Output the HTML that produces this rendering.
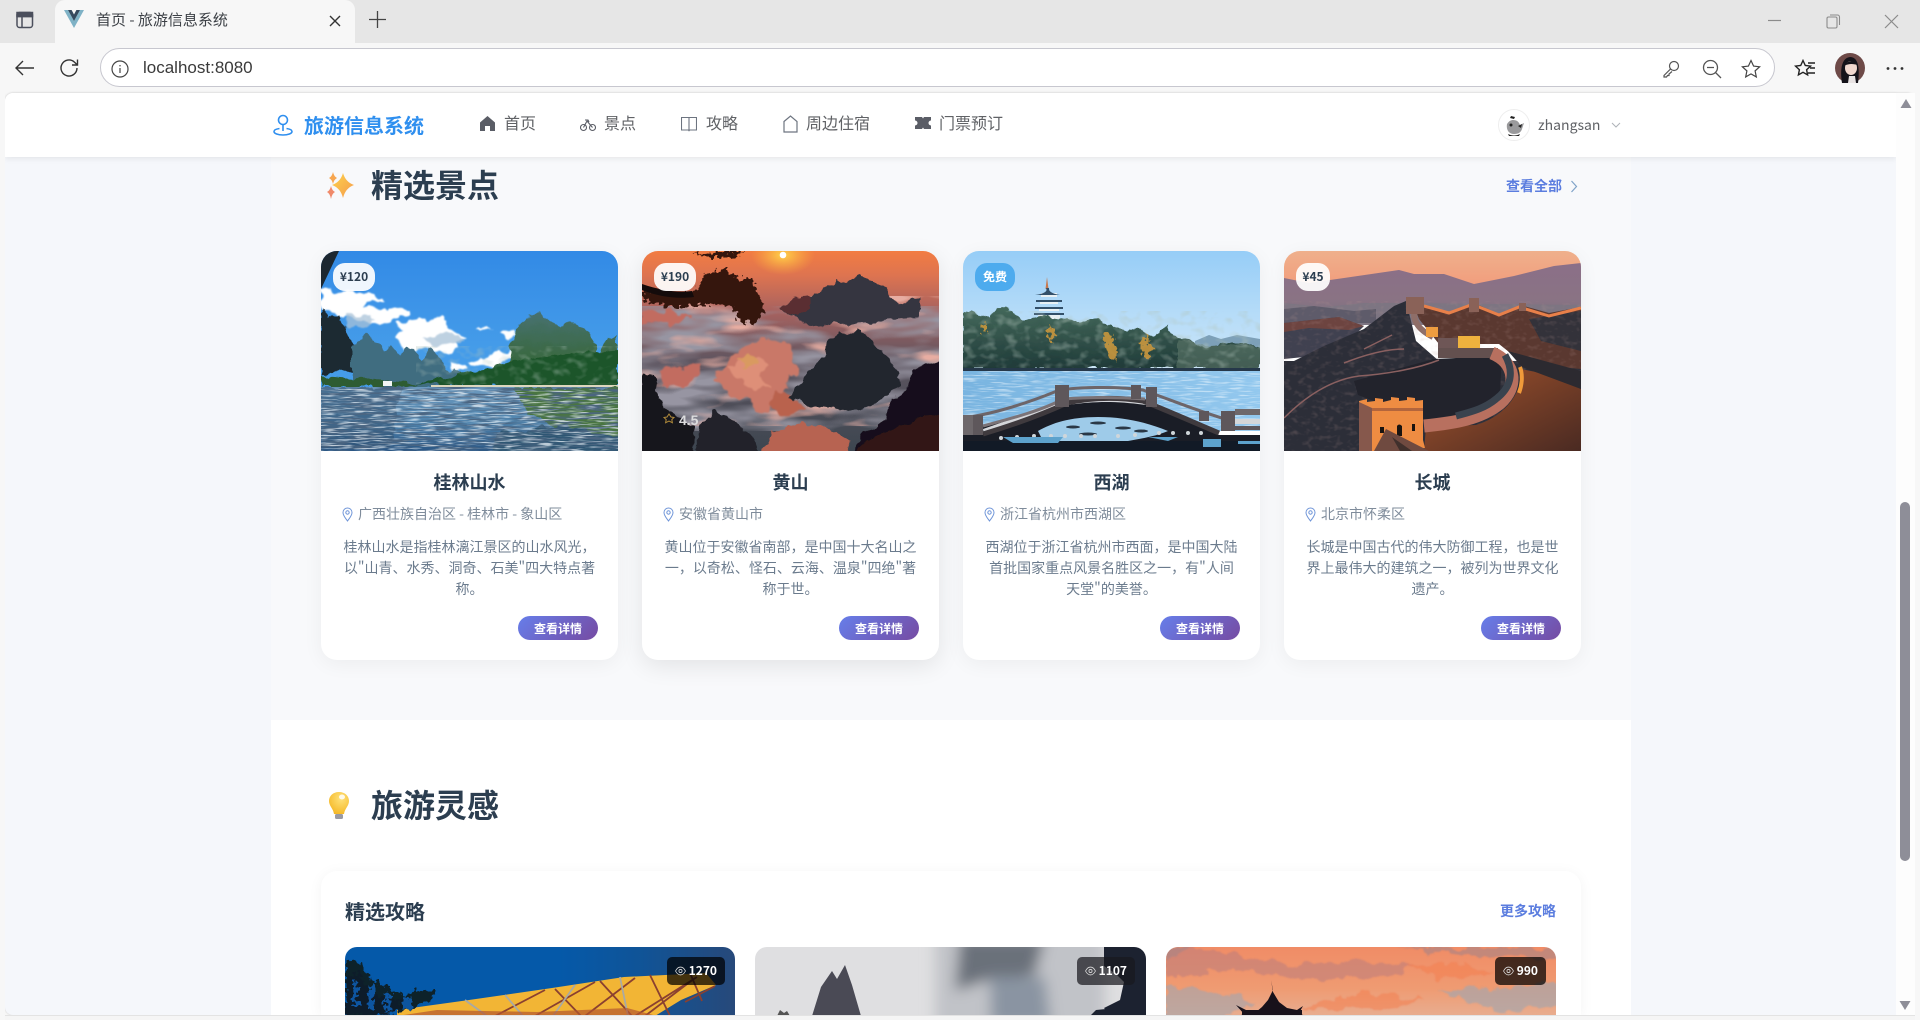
<!DOCTYPE html>
<html lang="zh"><head><meta charset="utf-8"><title>首页 - 旅游信息系统</title>
<style>
*{box-sizing:border-box;margin:0;padding:0}
html,body{width:1920px;height:1020px;overflow:hidden;background:#f7f7f7;font-family:"Liberation Sans","Noto Sans CJK SC",sans-serif}
#root{position:absolute;left:0;top:0;width:1920px;height:1020px;overflow:hidden}
.a{position:absolute;white-space:nowrap}
.c{font-family:"Noto Sans CJK SC","Liberation Sans",sans-serif}
#page{position:absolute;left:5px;top:93px;width:1910px;height:922px;background:#f5f7fb;border-radius:8px;overflow:hidden;box-shadow:0 0 2px rgba(0,0,0,.18)}
.nm{font:16px/24px "Noto Sans CJK SC",sans-serif;color:#606266;top:110px}
.card{position:absolute;top:251px;width:297px;height:409px;background:#fff;border-radius:16px;overflow:hidden;box-shadow:0 4px 20px rgba(0,0,0,.05)}
.card svg.img{position:absolute;left:0;top:0;width:297px;height:200px;display:block}
.badge{position:absolute;left:12px;top:12px;height:28px;line-height:28px;padding:0 8px;border-radius:12px;background:rgba(255,255,255,.92);font:700 12px/28px "Noto Sans CJK SC",sans-serif;color:#2c3e50}
.t{position:absolute;left:0;width:297px;top:218px;text-align:center;font:700 18px/26px "Noto Sans CJK SC",sans-serif;color:#2c3e50}
.loc{position:absolute;left:37px;top:253px;font:14px/20px "Noto Sans CJK SC",sans-serif;color:#7f8c9b;white-space:nowrap}
.pin{position:absolute;left:21px;top:256px}
.d{position:absolute;left:10px;width:277px;top:286px;text-align:center;font:14px/21px "Noto Sans CJK SC",sans-serif;color:#6b7b8d}
.btn{position:absolute;left:197px;top:365px;width:80px;height:24px;border-radius:12px;background:linear-gradient(135deg,#667eea,#764ba2);color:#fff;text-align:center;font:700 12px/25px "Noto Sans CJK SC",sans-serif}
.g{position:absolute;top:947px;height:69px;border-radius:12px 12px 0 0;overflow:hidden}
.v{position:absolute;top:957px;height:28px;border-radius:5px;background:rgba(0,0,0,.72);color:#fff;font:700 12px/28px "Noto Sans CJK SC",sans-serif}
.v svg{position:absolute;left:8px;top:9px}
.v span{position:absolute;right:8px;top:0}
</style></head><body>
<div id="root">
<svg width="0" height="0" style="position:absolute"><defs>
<filter id="rip" x="0" y="0" width="100%" height="100%"><feTurbulence type="fractalNoise" baseFrequency=".035 .55" numOctaves="2" seed="4"/><feColorMatrix values="0 0 0 0 .07  0 0 0 0 .13  0 0 0 0 .22  3.8 0 0 0 -1.55"/></filter>
<filter id="ripw" x="0" y="0" width="100%" height="100%"><feTurbulence type="fractalNoise" baseFrequency=".06 .7" numOctaves="2" seed="9"/><feColorMatrix values="0 0 0 0 .9  0 0 0 0 .96  0 0 0 0 1  0 4.5 0 0 -2.25"/></filter>
<filter id="cl" x="0" y="0" width="100%" height="100%"><feTurbulence type="fractalNoise" baseFrequency=".012 .05" numOctaves="3" seed="7"/><feColorMatrix values="0 0 0 0 .31  0 0 0 0 .3  0 0 0 0 .36  3 0 0 0 -1.05"/></filter>
<filter id="cl3" x="0" y="0" width="100%" height="100%"><feTurbulence type="fractalNoise" baseFrequency=".018 .06" numOctaves="3" seed="12"/><feColorMatrix values="0 0 0 0 .8  0 0 0 0 .42  0 0 0 0 .36  3.4 0 0 0 -1.8"/></filter>
<filter id="tr" x="0" y="0" width="100%" height="100%"><feTurbulence type="fractalNoise" baseFrequency=".09 .12" numOctaves="2" seed="5"/><feColorMatrix values="0 0 0 0 .45  0 0 0 0 .56  0 0 0 0 .5  3 0 0 0 -1.45"/></filter>
<filter id="gr" x="0" y="0" width="100%" height="100%"><feTurbulence type="fractalNoise" baseFrequency=".14 .2" numOctaves="2" seed="15"/><feColorMatrix values="0 0 0 0 .5  0 0 0 0 .32  0 0 0 0 .3  2.6 0 0 0 -1.3"/></filter>
<filter id="rg" x="-5%" y="-5%" width="110%" height="110%"><feTurbulence type="fractalNoise" baseFrequency=".08" numOctaves="3" seed="2"/><feDisplacementMap in="SourceGraphic" scale="9" xChannelSelector="R" yChannelSelector="G"/></filter>
<filter id="rc" x="-5%" y="-5%" width="110%" height="110%"><feTurbulence type="fractalNoise" baseFrequency=".06" numOctaves="3" seed="8"/><feDisplacementMap in="SourceGraphic" scale="16" xChannelSelector="R" yChannelSelector="G"/><feGaussianBlur stdDeviation=".7"/></filter>
<filter id="rf" x="-5%" y="-5%" width="110%" height="110%"><feTurbulence type="fractalNoise" baseFrequency=".22" numOctaves="2" seed="6"/><feDisplacementMap in="SourceGraphic" scale="13" xChannelSelector="R" yChannelSelector="G"/></filter>
<filter id="bl4"><feGaussianBlur stdDeviation="7"/></filter>
<filter id="bl1"><feGaussianBlur stdDeviation=".8"/></filter>
</defs></svg>

<!-- browser chrome -->
<div class="a" style="left:0;top:0;width:1920px;height:43px;background:#e6e6e6"></div>
<div class="a" style="left:55px;top:0;width:300px;height:43px;background:#f7f7f7;border-radius:10px 10px 0 0"></div>
<svg class="a" style="left:16px;top:11px" width="18" height="18" viewBox="0 0 18 18" fill="none" stroke="#4b4f5c" stroke-width="1.5"><rect x="1" y="1.5" width="15.5" height="15" rx="2.5"/><path d="M1 5.5h15.5M6 5.5v11"/><rect x="1" y="1.5" width="15.5" height="4" fill="#4b4f5c"/></svg>
<svg class="a" style="left:64px;top:10px" width="20" height="18" viewBox="0 0 20 18"><path d="M0 0h4l6 11L16 0h4L10 18z" fill="#7fb2c6"/><path d="M4 0h3.6L10 4.5 12.4 0H16l-6 11z" fill="#35495e"/></svg>
<div class="a c" style="left:96px;top:9px;font-size:15px;line-height:22px;color:#3c4046">首页 - 旅游信息系统</div>
<svg class="a" style="left:329px;top:15px" width="12" height="12" viewBox="0 0 12 12" stroke="#333" stroke-width="1.4"><path d="M1 1l10 10M11 1L1 11"/></svg>
<svg class="a" style="left:368px;top:10px" width="19" height="19" viewBox="0 0 19 19" stroke="#444" stroke-width="1.3"><path d="M9.5 1v17M1 9.5h17"/></svg>
<svg class="a" style="left:1768px;top:14px" width="14" height="14" stroke="#8b8b8b" stroke-width="1.2"><path d="M0 6.5h13"/></svg>
<svg class="a" style="left:1826px;top:14px" width="15" height="15" viewBox="0 0 15 15" fill="none" stroke="#8b8b8b" stroke-width="1.1"><rect x="1" y="3" width="10" height="11" rx="1.5"/><path d="M4 1h7.5A2 2 0 0 1 13.500 3v8"/></svg>
<svg class="a" style="left:1884px;top:14px" width="15" height="15" stroke="#8b8b8b" stroke-width="1.2"><path d="M1 1l13 13M14 1L1 14"/></svg>

<svg class="a" style="left:14px;top:59px" width="22" height="18" viewBox="0 0 22 18" fill="none" stroke="#333" stroke-width="1.4"><path d="M20 9H2M9 2L2 9l7 7"/></svg>
<svg class="a" style="left:59px;top:57px" width="22" height="22" viewBox="0 0 22 22" fill="none" stroke="#333" stroke-width="1.4"><path d="M18 11a8 8 0 1 1-2.600-5.900L18.500 8M18.500 2.500V8H13"/></svg>
<div class="a" style="left:100px;top:48px;width:1675px;height:39px;background:#fff;border:1px solid #c7c7cf;border-radius:20px"></div>
<svg class="a" style="left:111px;top:60px" width="18" height="18" viewBox="0 0 18 18" fill="none" stroke="#444" stroke-width="1.2"><circle cx="9" cy="9" r="8"/><path d="M9 8v5M9 5v1.400"/></svg>
<div class="a" style="left:143px;top:56px;font-size:17px;line-height:24px;color:#3a3a3a">localhost:8080</div>
<svg class="a" style="left:1662px;top:60px" width="18" height="18" viewBox="0 0 18 18" fill="none" stroke="#555" stroke-width="1.2"><circle cx="12" cy="6" r="4.500"/><path d="M8.500 9L2 15.500V17h2.500l1-1.500h1.500v-1.500L10 11.500"/></svg>
<svg class="a" style="left:1702px;top:59px" width="20" height="20" viewBox="0 0 20 20" fill="none" stroke="#555" stroke-width="1.3"><circle cx="8.500" cy="8.500" r="7"/><path d="M13.500 13.500L19 19M5 8.500h7"/></svg>
<svg class="a" style="left:1741px;top:59px" width="20" height="20" viewBox="0 0 20 20" fill="none" stroke="#444" stroke-width="1.2"><path d="M10 1.500l2.600 5.600 6 .7-4.500 4.100 1.200 6-5.300-3-5.300 3 1.200-6L1.400 7.800l6-.7z"/></svg>
<svg class="a" style="left:1794px;top:59px" width="22" height="20" viewBox="0 0 22 20" fill="none" stroke="#222" stroke-width="1.4"><path d="M9 1.500l2.300 5 5.200.6-3.900 3.600 1 5.200L9 13.300l-4.600 2.600 1-5.200L1.500 7.100l5.200-.6z"/><path d="M14 4h7M16 9h5M14 14h7"/></svg>
<svg class="a" style="left:1835px;top:53px" width="30" height="30" viewBox="0 0 30 30"><circle cx="15" cy="15" r="15" fill="#6e4a48"/><path d="M7 30C5 18 6 5 15 4c8 0 10 10 8 26z" fill="#15131a"/><ellipse cx="16" cy="15" rx="6" ry="7" fill="#f1d8cf"/><path d="M9 13c3-6 11-7 14-1-4-1-9-2-14 1z" fill="#15131a"/><path d="M14 23h6l1 7h-8z" fill="#e9e4e4"/></svg>
<svg class="a" style="left:1886px;top:66px" width="18" height="5" fill="#333"><circle cx="2" cy="2.500" r="1.400"/><circle cx="9" cy="2.500" r="1.400"/><circle cx="16" cy="2.500" r="1.400"/></svg>

<div id="page"></div>
<!-- page regions -->
<div class="a" style="left:271px;top:157px;width:1360px;height:563px;background:#f8f9fb"></div>
<div class="a" style="left:271px;top:720px;width:1360px;height:295px;background:#fff"></div>
<!-- nav -->
<div class="a" style="left:5px;top:93px;width:1891px;height:64px;background:#fff;border-radius:8px 0 0 0;box-shadow:0 2px 6px rgba(0,0,0,.07)"></div>
<svg class="a" style="left:273px;top:114px" width="20" height="22" viewBox="0 0 20 22" fill="none" stroke="#2f8fef" stroke-width="1.600"><circle cx="10" cy="6" r="4.500"/><path d="M10 10.500V17M6.500 14.500C3 15 1 16 1 17.500 1 19.500 5 21 10 21s9-1.500 9-3.500c0-1.500-2-2.500-5.500-3"/></svg>
<div class="a c" style="left:304px;top:110px;font-size:20px;line-height:29px;font-weight:700;color:#2f8fef">旅游信息系统</div>

<svg class="a" style="left:480px;top:116px" width="15" height="15" viewBox="0 0 15 15" fill="#5a5d66"><path d="M7.500 0L15 6.500V15H10v-5H5v5H0V6.500z"/></svg>
<div class="a nm" style="left:504px">首页</div>
<svg class="a" style="left:580px;top:116px" width="16" height="16" viewBox="0 0 16 16" fill="none" stroke="#5a5d66" stroke-width="1.100"><circle cx="3.500" cy="11.500" r="3"/><circle cx="12.500" cy="11.500" r="3"/><path d="M3.500 11.500L7 5l5.500 6.500M5 4h3l1 2"/></svg>
<div class="a nm" style="left:604px">景点</div>
<svg class="a" style="left:681px;top:116px" width="16" height="16" viewBox="0 0 16 16" fill="none" stroke="#6d7480" stroke-width="1.100"><path d="M.5 1.500h15v12.500h-7l-.5.700-.5-.7h-7zM8 1.500V14"/></svg>
<div class="a nm" style="left:706px">攻略</div>
<svg class="a" style="left:783px;top:115px" width="15" height="18" viewBox="0 0 15 18" fill="none" stroke="#6d7480" stroke-width="1.200"><path d="M1 6.500L7.500 1 14 6.500V17H1z"/></svg>
<div class="a nm" style="left:806px">周边住宿</div>
<svg class="a" style="left:915px;top:117px" width="16" height="12" viewBox="0 0 16 12" fill="#5a5d66"><path d="M0 0h7l1 1.500L9 0h7v3.500a2.500 2.500 0 0 0 0 5V12H9l-1-1.500L7 12H0V8.500a2.500 2.500 0 0 0 0-5z"/></svg>
<div class="a nm" style="left:939px">门票预订</div>

<svg class="a" style="left:1498px;top:109px" width="32" height="32" viewBox="0 0 32 32"><circle cx="16" cy="16" r="15.500" fill="#fff" stroke="#eee"/><path d="M9 15c2-3 4-4 6-4 4 0 6 2 7 5l4-2-2 6c-1 3-3 5-8 5-5 0-8-4-7-10z" fill="#9a9a9c"/><path d="M10 25c4 2 8 2 12 0l-1 2H11zM13 7l4 1-1 2-4-1zM20 17l4-2-1 4z" fill="#222"/><circle cx="13" cy="16" r="1.500" fill="#222"/></svg>
<div class="a c" style="left:1538px;top:115px;font-size:14px;line-height:20px;color:#606266">zhangsan</div>
<svg class="a" style="left:1611px;top:122px" width="10" height="7" fill="none" stroke="#aeb2b8"><path d="M1 1l4 4 4-4"/></svg>

<!-- scrollbar -->
<div class="a" style="left:1896px;top:93px;width:19px;height:922px;background:#fdfdfd"></div>
<svg class="a" style="left:1900px;top:98px" width="12" height="11" fill="#8e8e98"><path d="M6 1l5.500 9H.5z"/></svg>
<div class="a" style="left:1900px;top:502px;width:10px;height:359px;border-radius:5px;background:#8e8e98"></div>
<svg class="a" style="left:1899px;top:1000px" width="12" height="11" fill="#8e8e98"><path d="M.5 1h11L6 10z"/></svg>

<!-- section 1 header -->
<svg class="a" style="left:325px;top:171px" width="30" height="30" viewBox="0 0 30 30"><defs><linearGradient id="sp" x1="0" y1="0" x2="1" y2="1"><stop offset="0" stop-color="#fdd34a"/><stop offset="1" stop-color="#f59a4e"/></linearGradient></defs><path d="M18 2Q20.500 11 29 14 20.500 17 18 27 15.500 17 7 14 15.500 11 18 2z" fill="url(#sp)"/><path d="M8 1Q9 5.500 12 7 9 8.500 8 13 7 8.500 4 7 7 5.500 8 1z" fill="#f7a64f"/><path d="M6 15Q7 19.500 10 21 7 22.500 6 28 5 22.500 2 21 5 19.500 6 15z" fill="#f08a6a"/></svg>
<div class="a c" style="left:371px;top:161px;font-size:32px;line-height:46px;font-weight:700;color:#2c3e50">精选景点</div>
<div class="a c" style="left:1506px;top:176px;font-size:14px;line-height:20px;font-weight:700;color:#5b7ddf">查看全部</div>
<svg class="a" style="left:1570px;top:180px" width="8" height="13" fill="none" stroke="#7fa3c8" stroke-width="1.200"><path d="M1.500 1l5 5.500-5 5.500"/></svg>

<!-- card 1 -->
<div class="card" style="left:321px">
<svg class="img" viewBox="0 0 297 200" preserveAspectRatio="none">
<defs><linearGradient id="s1" x1="0" y1="0" x2="0" y2="1"><stop offset="0" stop-color="#328ae6"/><stop offset=".7" stop-color="#459ce9"/></linearGradient>
<linearGradient id="h1" x1="0" y1="0" x2="0" y2="1"><stop offset="0" stop-color="#47706f"/><stop offset=".45" stop-color="#3b6a45"/><stop offset="1" stop-color="#1d5228"/></linearGradient>
<linearGradient id="w1" x1="0" y1="0" x2="0" y2="1"><stop offset="0" stop-color="#6d9abf"/><stop offset=".55" stop-color="#4f84ae"/><stop offset="1" stop-color="#2a5684"/></linearGradient></defs>
<rect width="297" height="140" fill="url(#s1)"/>
<g fill="#fff" filter="url(#rc)"><path d="M0 36l22 6 30-3 10 9-18 3-2 6 26-2 20 4 2 5-14 2-6 6-12 4-26-8-32-8z"/><path d="M74 72l16-4 22-3 14 4 6 10 14 8-14 4 6 7-12 4-16-2-10-2-16 2-8-12 4-10z"/><path d="M153 79l12-4 7 4zM177 80l16-3 1 7-7 2zM150 109l14-5 24-1 5-8v14l-20 6-22-2zM128 113l14-1 4 5-16 1z"/></g>
<g fill="#a9c2d8" opacity=".75" filter="url(#rc)"><path d="M20 62l30 4-6 12-20-4zM100 86l36-3 6 8-30 4z"/></g>
<g filter="url(#rg)">
<path d="M0 55l5 10 6-1 8-1 8 18 6 15 4 22-37 6z" fill="#1c2b33"/>
<path d="M30 98l14-14 10 4 9 12 8-6 7 10 8-8 9 6 6 8 9-13 10 10 8 16 6-4 6 5 0 8-50 8-60-6z" fill="#3f6d80"/>
<path d="M188 112l5-30 12-17 14-3 13 9 8 6 10-5 13 5 9 12 6 16 9-18 8-4v70H188z" fill="url(#h1)"/>
<path d="M93 133l30-6 40-9 30-8 40-6 64-5v34l-110 2z" fill="#1f5429"/>
<path d="M0 125l50 4 45 4-10 3H0z" fill="#2f5b31"/>
</g>
<rect x="95" y="95" width="202" height="38" opacity=".35" filter="url(#tr)"/>
<rect x="62" y="130" width="9" height="5" fill="#f4f6f5"/>
<rect x="110" y="134" width="187" height="2" fill="#dcd7bd"/>
<rect y="136" width="297" height="64" fill="url(#w1)"/>
<g filter="url(#rg)"><path d="M0 137l80 0-10 60H0z" fill="#2d4f70" opacity=".55"/>
<path d="M192 137h115v50l-70-12-30-12z" fill="#4a7540"/>
<path d="M175 182l60-8 70 12v24H170z" fill="#2f5673"/></g>
<rect y="136" width="297" height="64" filter="url(#rip)"/>
<rect y="138" width="297" height="62" filter="url(#ripw)" opacity=".7"/>
<path d="M0 0h18L0 38z" fill="#1c2730"/>
</svg>
<div class="badge" style="width:42px;padding:0;text-align:center">¥120</div>
<div class="t">桂林山水</div>
<svg class="pin" width="11" height="15" viewBox="0 0 11 15" fill="none" stroke="#6f95d8" stroke-width="1"><path d="M5.500 14C3 10.500 1 8.500 1 5.500a4.500 4.500 0 0 1 9 0c0 3-2 5-4.500 8.500z"/><circle cx="5.500" cy="5.500" r="1.700"/></svg>
<div class="loc">广西壮族自治区 - 桂林市 - 象山区</div>
<div class="d">桂林山水是指桂林漓江景区的山水风光，<br>以"山青、水秀、洞奇、石美"四大特点著<br>称。</div>
<div class="btn">查看详情</div>
</div>

<!-- card 2 -->
<div class="card" style="left:642px;box-shadow:0 6px 24px rgba(0,0,0,.09)">
<svg class="img" viewBox="0 0 297 200" preserveAspectRatio="none">
<defs><linearGradient id="s2" x1="0" y1="0" x2="0" y2="1"><stop offset="0" stop-color="#f27c42"/><stop offset=".12" stop-color="#de7450"/><stop offset=".3" stop-color="#a8625f"/><stop offset=".55" stop-color="#5e5560"/><stop offset="1" stop-color="#3d4650"/></linearGradient>
<radialGradient id="sun"><stop offset="0" stop-color="#ffd34a"/><stop offset="1" stop-color="#ffb03e" stop-opacity="0"/></radialGradient></defs>
<rect width="297" height="200" fill="url(#s2)"/>
<ellipse cx="141" cy="4" rx="32" ry="20" fill="url(#sun)"/><circle cx="141" cy="4" r="3.300" fill="#fff"/>
<rect y="55" width="297" height="125" filter="url(#cl)"/>
<rect y="45" width="297" height="130" filter="url(#cl3)"/>
<g filter="url(#rg)"><path d="M138 56l14-8 16-2 12-6 14-12 12 3 12-6 13 3 14 12 12 14 20-8v22l-30 2-50 3-30 3z" fill="#35343f"/>
<path d="M138 56l14-8 16-2 0 10-14 10z" fill="#5a2f30"/></g>
<g filter="url(#rc)"><path d="M68 124l18-8 6-14 26-14 24 4 12 12 4 14-6 10-10-2 8 14-14 6-10 16-14-4-10-10-12-2-12-14z" fill="#c97868"/>
<path d="M88 116l16-8 14 2 8 8-6 8 6 10-10 4-12-6-10-8z" fill="#de8f78"/>
<path d="M98 108l12-3 5 8-14 4z" fill="#d99a60"/>
<path d="M129 140l16 4 16 12-14 8-16-6z" fill="#b9624e"/>
<path d="M0 62l26-4 24 8-12 8-38-2zM14 122l30-10 16 0-2 10-16 12-18 2z" fill="#c26c60"/></g>
<g filter="url(#rg)"><path d="M146 148l14-18 10-14 10-8 8-20 10-8 10 5 10-6 12 10 14 18 10 10 4 16-14 14-26 10-20 2-26-4z" fill="#23262f"/>
<path d="M0 122l12 2 4 24 18 18 18 10-1 30H-6z" fill="#17141b"/>
<path d="M52 206l6-32 14-14 14 4 12 12 12 6 8 24z" fill="#20242c"/>
<path d="M118 206l12-26 30-8 20 4 28 12-6 18z" fill="#b76351"/>
<path d="M210 206l10-22 22-14 8-22 14-8 8-22 30-10v98z" fill="#14101a"/>
<path d="M210 206l14-18 24-8 22-10 32-8v44z" fill="#3c1a17" opacity=".75"/></g>
<g filter="url(#rf)" fill="#34140f"><path d="M0 36c16 5 32 9 50 6l8-8 4-10 20-6 14 10 14 0 8 18 4 14-10 14-14-4-6-12-14-6-16 2-22 3c-14 0-26-4-40-8z"/><path d="M50 0l12 3 16-3 24 0-10 5-16 1-14 0z"/></g>
<path d="M0 33c18 6 34 9 50 7l2 6c-18 2-34 0-52-7z" fill="#140b0b"/>
<path d="M24 143l2 3 3 .5-2.200 2.200.6 3-3.400-1.700-3.400 1.700.6-3-2.200-2.200 3-.5z" transform="translate(3 20)" fill="none" stroke="#b08a3a" stroke-width="1"/>
</svg>
<div class="badge" style="width:42px;padding:0;text-align:center">¥190</div>
<div class="a" style="left:37px;top:159px;font:700 14px/20px 'Liberation Sans',sans-serif;color:#dcdcde">4.5</div>
<div class="t">黄山</div>
<svg class="pin" width="11" height="15" viewBox="0 0 11 15" fill="none" stroke="#6f95d8" stroke-width="1"><path d="M5.500 14C3 10.500 1 8.500 1 5.500a4.500 4.500 0 0 1 9 0c0 3-2 5-4.500 8.500z"/><circle cx="5.500" cy="5.500" r="1.700"/></svg>
<div class="loc">安徽省黄山市</div>
<div class="d">黄山位于安徽省南部，是中国十大名山之<br>一，以奇松、怪石、云海、温泉"四绝"著<br>称于世。</div>
<div class="btn">查看详情</div>
</div>

<!-- card 3 -->
<div class="card" style="left:963px">
<svg class="img" viewBox="0 0 297 200" preserveAspectRatio="none">
<defs><linearGradient id="s3" x1="0" y1="0" x2="0" y2="1"><stop offset="0" stop-color="#96cdf7"/><stop offset=".5" stop-color="#b4dbf8"/><stop offset="1" stop-color="#cde6f8"/></linearGradient>
<linearGradient id="l3" x1="0" y1="0" x2="1" y2="0"><stop offset="0" stop-color="#79b4e0"/><stop offset="1" stop-color="#93c8ee"/></linearGradient>
<linearGradient id="t3" x1="0" y1="0" x2="0" y2="1"><stop offset="0" stop-color="#456a5c"/><stop offset="1" stop-color="#1f3a38"/></linearGradient></defs>
<rect width="297" height="120" fill="url(#s3)"/>
<path d="M232 90l14-6 12 4 16-4 23 4v20h-65z" fill="#7da0b8"/>
<path d="M84 26l1.500 12h-3z" fill="#c9794f"/>
<g fill="#e8f0f4"><rect x="78" y="42" width="16" height="4"/><rect x="77" y="49" width="18" height="4"/><rect x="76" y="56" width="20" height="4"/><rect x="75" y="62" width="22" height="6"/></g>
<g fill="#33506a"><path d="M72 44q14-2 11-7h3q-1 5 11 7z"/><path d="M73 49h26v2H73zM72 56h28v2H72zM71 62h30v2H71z"/></g>
<path d="M0 60l15 2 13 6 5-10 9-3 10 8 8 5 30-3 20 3 20 0 12 4 13 5 15 3 8-2 10 7 10-5 7-8 7 13 13 3 15 7 20-3 20 0 17 4v22H0z" fill="url(#t3)" filter="url(#rg)"/>
<path d="M215 88l30 5 52 3v22h-82z" fill="#66806f" opacity=".5" filter="url(#rg)"/>
<rect y="60" width="297" height="58" filter="url(#tr)" opacity=".4"/>
<g fill="#c8963e" opacity=".9" filter="url(#rf)"><path d="M140 84l6-4 8 16-2 14-6-4zM178 90l6-6 5 14-3 10-7-6zM88 72l5 14-5 4-3-8zM18 74l6-2 0 8-5 2z"/></g>
<rect y="117" width="297" height="4" fill="#26384a"/>
<rect y="120" width="297" height="60" fill="url(#l3)"/>
<rect y="120" width="297" height="60" filter="url(#ripw)" opacity=".5"/>
<path d="M0 178c30-6 60-14 100-26 30-6 60-6 86 2 26 10 46 20 70 30l41 0v16H0z" fill="#1a1d26"/>
<path d="M75 180c14-8 32-14 60-14s50 6 70 14c-14 6-30 8-40 10H80z" fill="#9ecbe9"/>
<g fill="#2a3846"><ellipse cx="110" cy="176" rx="7" ry="1.500"/><ellipse cx="135" cy="172" rx="8" ry="1.500"/><ellipse cx="160" cy="177" rx="8" ry="1.500"/><ellipse cx="125" cy="183" rx="9" ry="1.500"/><ellipse cx="178" cy="180" rx="7" ry="1.500"/></g>
<g fill="#cfd6da"><circle cx="38" cy="187" r="2"/><circle cx="54" cy="186" r="2"/><circle cx="71" cy="185" r="2"/><circle cx="88" cy="185" r="2"/><circle cx="102" cy="185" r="2"/><circle cx="118" cy="185" r="2"/><circle cx="132" cy="185" r="2"/><circle cx="155" cy="185" r="2"/><circle cx="172" cy="184" r="2"/><circle cx="196" cy="182" r="2"/><circle cx="210" cy="182" r="2"/><circle cx="225" cy="182" r="2"/><circle cx="238" cy="182" r="2"/></g>
<path d="M20 178c30-10 60-22 82-29 28-4 50-4 78-1l3 6c-30-4-50-4-78 0-30 8-55 22-84 30z" fill="#d4d6da"/>
<path d="M20 183c30-9 56-18 84-31 26-6 50-6 76-2 30 12 52 22 76 32" fill="none" stroke="#3f3a3e" stroke-width="5"/>
<path d="M0 167c30-4 62-14 94-27 14-4 60-5 86-1 28 10 52 20 82 29" fill="none" stroke="#6d6569" stroke-width="3"/>
<path d="M20 175c30-8 60-16 80-27 26-2 54-2 82 0" fill="none" stroke="#7b7377" stroke-width="3"/>
<g fill="#5e575b"><rect x="92" y="134" width="14" height="22"/><rect x="168" y="134" width="10" height="14"/><rect x="183" y="136" width="11" height="20"/><rect x="8" y="164" width="12" height="20"/><rect x="258" y="160" width="14" height="20"/><rect x="236" y="160" width="10" height="10"/></g>
<rect x="272" y="158" width="25" height="6" fill="#6e686b"/><rect x="272" y="168" width="25" height="5" fill="#d4d6d8"/><rect x="272" y="175" width="25" height="4" fill="#5e575b"/>
<rect x="0" y="164" width="10" height="20" fill="#6e686b"/>
<rect y="190" width="297" height="10" fill="#121a26"/>
<path d="M40 186h60l-5 6H50zM185 186h30l-10 4zM240 188h18l0 8h-18zM275 190h22v3h-22z" fill="#5da2cc"/>
</svg>
<div class="badge" style="width:40px;padding:0;text-align:center;background:#4dabee;color:#fff">免费</div>
<div class="t">西湖</div>
<svg class="pin" width="11" height="15" viewBox="0 0 11 15" fill="none" stroke="#6f95d8" stroke-width="1"><path d="M5.500 14C3 10.500 1 8.500 1 5.500a4.500 4.500 0 0 1 9 0c0 3-2 5-4.500 8.500z"/><circle cx="5.500" cy="5.500" r="1.700"/></svg>
<div class="loc">浙江省杭州市西湖区</div>
<div class="d">西湖位于浙江省杭州市西面，是中国大陆<br>首批国家重点风景名胜区之一，有"人间<br>天堂"的美誉。</div>
<div class="btn">查看详情</div>
</div>

<!-- card 4 -->
<div class="card" style="left:1284px">
<svg class="img" viewBox="0 0 297 200" preserveAspectRatio="none">
<defs><linearGradient id="s4" x1="0" y1="0" x2="0" y2="1"><stop offset="0" stop-color="#efb08c"/><stop offset="1" stop-color="#f29a7a"/></linearGradient>
<linearGradient id="m4" x1="0" y1="0" x2="0" y2="1"><stop offset="0" stop-color="#8b6f88"/><stop offset=".6" stop-color="#8a7384"/><stop offset="1" stop-color="#76727f"/></linearGradient>
<linearGradient id="r4" x1="0" y1="0" x2="1" y2="1"><stop offset="0" stop-color="#a2532c"/><stop offset="1" stop-color="#4a2a22"/></linearGradient></defs>
<rect width="297" height="40" fill="url(#s4)"/>
<path d="M0 27l25 5 35-5 55-8 15 4 30 0 30 10 40-8 40-10 27-3v60H0z" fill="url(#m4)"/>
<path d="M0 52l40 4 40-4 40 0 177 2v20H0z" fill="#7d7582"/>
<path d="M0 58l30-3 40 5 22-2v14H0z" fill="#5e5b6a"/>
<path d="M0 72l55-6 25 9-20 20-30 10-30 3z" fill="#404150"/>
<path d="M0 72l55-6 25 9-15 4-40-2-25 4z" fill="#6d4440"/>
<rect width="297" height="200" y="110" fill="#2c2e38"/>
<path d="M0 115l40-20 40-17 30-23 12-5 10 40 23 20 60-10 15 60-90 10 1 30H0z" fill="#2c2e38"/>
<path d="M130 55l15 2 20 5 25-10 25 11 25-8 25 7 32-6v62l-57-5-25-20h-60l-20-25z" fill="#5a3830"/>
<path d="M245 68l52-8v40l-40-10z" fill="#33323a"/>
<rect y="50" width="297" height="150" filter="url(#gr)" opacity=".22"/>
<path d="M70 130l80-22 68-3-2 36-26 20-50 8-66-25z" fill="#22232c"/>
<path d="M0 167c20-20 45-38 75-42 30-2 60-8 80-16M80 98l28-14M60 112c20-8 40-14 60-14" fill="none" stroke="#8a6060" stroke-width="1.500"/>
<path d="M140 55l25 7 22-8 8 2 20 8 20-8 30 9 20-5 12-3" fill="none" stroke="#e8804a" stroke-width="3"/>
<path d="M131 58c-3 10 2 20 18 28" fill="none" stroke="#8f6e68" stroke-width="6"/>
<g fill="#8a6258"><rect x="122" y="46" width="18" height="17"/><rect x="185" y="47" width="10" height="14"/><rect x="235" y="52" width="7" height="8"/></g>
<path d="M142 76h12v10h-12z" fill="#ee9c40"/>
<path d="M154 87h20v20h-20z" fill="#6e5656"/><path d="M174 85h22v12h-22z" fill="#efb23e"/><path d="M154 97h60v10h-60z" fill="#63504f"/>
<path d="M140 200l2-24 50-2c20-6 36-20 42-36 4-8 4-14 3-20l25 5 35 15v62z" fill="url(#r4)"/>
<path d="M224 100l73 20v18l-59-22z" fill="#2c2a30"/>
<path d="M208 102C232 112 234 136 216 152 196 168 170 172 140 175" fill="none" stroke="#b8705f" stroke-width="13"/>
<path d="M221 104C230 120 228 136 212 148 200 158 186 161 172 165" fill="none" stroke="#3a434e" stroke-width="7"/>
<path d="M236 116c3 8 2 18-1 26" fill="none" stroke="#f09a3a" stroke-width="4"/>
<path d="M75 150l8-2v3l8-1v-3l8 1v3l8-2v-3l8 1v3l8-1v-3l8 1v3l8-1v40l2 8-34 3-16 0H75z" fill="#ee8c42"/>
<path d="M75 151l13 6v43H75z" fill="#86584c"/>
<path d="M88 157h51v3H88z" fill="#b3653c"/>
<path d="M113 175q2-3 5 0v10h-5zM96 176h4v6h-4zM128 173h3v7h-3z" fill="#1a1410"/>
<path d="M102 178l43 22H90z" fill="#6f4a40"/>
<path d="M108 186l20 14h-12z" fill="#40302c"/>
</svg>
<div class="badge" style="width:34px;padding:0;text-align:center">¥45</div>
<div class="t">长城</div>
<svg class="pin" width="11" height="15" viewBox="0 0 11 15" fill="none" stroke="#6f95d8" stroke-width="1"><path d="M5.500 14C3 10.500 1 8.500 1 5.500a4.500 4.500 0 0 1 9 0c0 3-2 5-4.500 8.500z"/><circle cx="5.500" cy="5.500" r="1.700"/></svg>
<div class="loc">北京市怀柔区</div>
<div class="d">长城是中国古代的伟大防御工程，也是世<br>界上最伟大的建筑之一，被列为世界文化<br>遗产。</div>
<div class="btn">查看详情</div>
</div>

<!-- section 2 -->
<svg class="a" style="left:328px;top:791px" width="22" height="29" viewBox="0 0 22 29"><defs><radialGradient id="bu" cx=".6" cy=".3" r=".8"><stop offset="0" stop-color="#ffe27a"/><stop offset="1" stop-color="#f4b41f"/></radialGradient></defs><path d="M11 1c6 0 10 4 10 9 0 5-4 7-5 13H6C5 17 1 15 1 10 1 5 5 1 11 1z" fill="url(#bu)"/><ellipse cx="14" cy="6" rx="3" ry="2.500" fill="#fff" opacity=".85"/><rect x="7" y="23" width="8" height="5" rx="1.500" fill="#9a9aa3"/></svg>
<div class="a c" style="left:371px;top:781px;font-size:32px;line-height:46px;font-weight:700;color:#2c3e50">旅游灵感</div>

<div class="a" style="left:321px;top:871px;width:1260px;height:144px;background:#fff;border-radius:16px 16px 0 0;box-shadow:0 2px 14px rgba(0,0,0,.05)"></div>
<div class="a c" style="left:345px;top:896px;font-size:20px;line-height:29px;font-weight:700;color:#2c3e50">精选攻略</div>
<div class="a c" style="left:1500px;top:901px;font-size:14px;line-height:20px;font-weight:700;color:#5b7ddf">更多攻略</div>

<!-- guide images -->
<div class="g" style="left:345px;width:390px">
<svg width="390" height="69" viewBox="0 0 390 69">
<defs><linearGradient id="b5" x1="0" y1="0" x2="1" y2="0"><stop offset=".55" stop-color="#0559a9"/><stop offset=".75" stop-color="#0f5498"/><stop offset="1" stop-color="#27497a"/></linearGradient></defs>
<rect width="390" height="69" fill="url(#b5)"/>
<path d="M52 69V63l72-10 83-12 72-11 82-4 10 12-35 15-26 16z" fill="#f2b535"/>
<g fill="none" stroke="#8a4030" stroke-width="1.800"><path d="M150 69l50-26M190 69l60-34M240 69l50-38M300 69l50-38M340 55l30-16M210 42l26 27M255 34l32 35M305 28l20 41M345 26l12 28M352 30l-62 39"/></g>
<g fill="none" stroke="#a9a9a4" stroke-width="1.800"><path d="M120 53l22 16M160 48l18 21M230 38l-22 31M275 30l8 39"/></g>
<path d="M52 69l40-6 100 2 90-4 30 8z" fill="#b3562f" opacity=".7"/>
<g fill="#11202c" filter="url(#rf)"><path d="M0 14l8-2 8 4 12 18 14 6 16 8 20-6 14 4-8 8-20 8-20 4-44 8z"/><path d="M2 30l10-6 6 12 20 16 20 2-10 14H0z" opacity=".6"/></g>
<g filter="url(#rf)" fill="#0b55a0"><rect x="8" y="34" width="5" height="26"/><rect x="24" y="38" width="5" height="24"/><rect x="40" y="46" width="6" height="18"/><rect x="58" y="50" width="8" height="12"/></g>
</svg></div>

<div class="g" style="left:755px;width:391px">
<svg width="391" height="69" viewBox="0 0 391 69">
<rect width="391" height="69" fill="#dfdfe1"/>
<g filter="url(#bl4)"><path d="M180 -20H350V90H180z" fill="#c1c3c8"/><path d="M205 -10H290L280 28 230 34 200 44z" fill="#6b717a"/><path d="M235 30h55l6 50h-60z" fill="#8a94a2"/></g>
<path d="M57 69L66 40 77 24 82 32 90 18 97 38 106 69z" fill="#4a4a55"/>
<path d="M349 0h42v69h-36l-6-8 16-8 4-18-8-8-12-8z" fill="#1c2230"/>
<path d="M335 69l6-6 20-2v8z" fill="#1c2230"/>
<path d="M22 69l3-6 4 3 3-2 3 5z" fill="#555"/>
</svg></div>

<div class="g" style="left:1166px;width:390px">
<svg width="390" height="69" viewBox="0 0 390 69">
<defs><linearGradient id="s7" x1="0" y1="0" x2="0" y2="1"><stop offset="0" stop-color="#f08c66"/><stop offset=".6" stop-color="#ef9b72"/><stop offset="1" stop-color="#e8ad90"/></linearGradient></defs>
<rect width="390" height="69" fill="url(#s7)"/>
<g filter="url(#rc)" opacity=".75"><path d="M0 0l60 4 40 10 40 4 50-6 60 8-40 12-70 0-70-10-70 10z" fill="#b97c7e" opacity=".7"/>
<path d="M230 0h170v12l-90-4zM0 0h30L0 16z" fill="#93818f" opacity=".65"/>
<path d="M0 38l60 8 30 10-40 16H0z" fill="#a8a4aa" opacity=".9"/>
<path d="M270 44l130-8v24l-70 6z" fill="#a5a5ac" opacity=".9"/>
<path d="M130 62l70-16 60 6-40 10zM240 20l60-4 30 10-60 6z" fill="#f37e4e" opacity=".7"/></g>
<path d="M105 33l2 12 6 10 8 6 10 2 6-4-4 7 6 3H72l6-2-8-9 10 5 10 2 6-5 6-7 5-10z" fill="#18111a"/>
<rect x="76" y="63" width="60" height="6" fill="#18111a"/>
</svg></div>

<div class="v" style="left:667px;width:58px"><svg width="11" height="10" viewBox="0 0 14 12" fill="none" stroke="#ddd"><path d="M.7 6C2.500 2.500 4.500 1 7 1s4.500 1.500 6.300 5C11.500 9.500 9.500 11 7 11S2.500 9.500.7 6z"/><circle cx="7" cy="6" r="2"/></svg><span>1270</span></div>
<div class="v" style="left:1077px;width:58px;background:rgba(25,25,30,.72)"><svg width="11" height="10" viewBox="0 0 14 12" fill="none" stroke="#ddd"><path d="M.7 6C2.500 2.500 4.500 1 7 1s4.500 1.500 6.300 5C11.500 9.500 9.500 11 7 11S2.500 9.500.7 6z"/><circle cx="7" cy="6" r="2"/></svg><span>1107</span></div>
<div class="v" style="left:1495px;width:51px"><svg width="11" height="10" viewBox="0 0 14 12" fill="none" stroke="#ddd"><path d="M.7 6C2.500 2.500 4.500 1 7 1s4.500 1.500 6.300 5C11.500 9.500 9.500 11 7 11S2.500 9.500.7 6z"/><circle cx="7" cy="6" r="2"/></svg><span>990</span></div>

<!-- bottom strip of browser frame -->
<div class="a" style="left:0;top:1015px;width:1920px;height:5px;background:#f5f5f5;border-top:1px solid #e3e3e3"></div>
<div class="a" style="left:0;top:93px;width:5px;height:927px;background:#f7f7f7"></div>
<div class="a" style="left:1915px;top:93px;width:5px;height:927px;background:#f7f7f7"></div>
</div>
</body></html>
